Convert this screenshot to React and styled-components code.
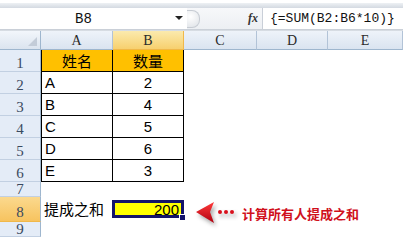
import React from "react";
import styled, { createGlobalStyle } from "styled-components";

const GlobalStyle = createGlobalStyle`
  html, body {
    margin: 0;
    padding: 0;
    background: #fff;
  }
  body {
    width: 419px;
    height: 251px;
    overflow: hidden;
  }
`;

const COLS = ["A", "B", "C", "D", "E"];
const COL_WIDTHS = [72, 71, 73, 71, 75];
const ROW_HEIGHTS = [22, 22, 22, 22, 22, 22, 15, 25, 15];

const DATA = [
    ["姓名", "数量"],
    ["A", "2"],
    ["B", "4"],
    ["C", "5"],
    ["D", "6"],
    ["E", "3"],
];

const Page = styled.div`
    position: relative;
    width: 419px;
    height: 251px;
    background: #fff;
`;

const Sheet = styled.div`
    width: 403px;
    display: flex;
    flex-direction: column;
`;

const RibbonEdge = styled.div`
    margin-top: 3px;
    height: 5px;
    background: linear-gradient(#eef1f4, #d3d9e1);
`;

const FormulaRow = styled.div`
    display: grid;
    grid-template-columns: 187px 75px 1fr;
    height: 21px;
    background: #fff;
`;

const NameBox = styled.div`
    position: relative;
    display: flex;
    align-items: center;
    justify-content: center;
    padding-right: 20px;
    font: 14px "Liberation Mono", monospace;
    color: #111;
`;

const DropArrow = styled.span`
    position: absolute;
    right: 4px;
    top: 8px;
    width: 0;
    height: 0;
    border-left: 4px solid transparent;
    border-right: 4px solid transparent;
    border-top: 4px solid #222;
`;

const FxZone = styled.div`
    display: flex;
    align-items: center;
    justify-content: space-between;
    padding: 0 4px 0 4px;
    background: linear-gradient(#f7f8fa, #eceff3);
`;

const RoundButton = styled.span`
    width: 12px;
    height: 16px;
    border-radius: 0 8px 8px 0;
    border: 1px solid #c7ccd3;
    border-left: none;
    background: radial-gradient(circle at 30% 35%, #fff, #dde1e6);
    margin-left: -4px;
`;

const Fx = styled.span`
    font: italic bold 12px "Liberation Serif", serif;
    color: #333;
`;

const FormulaInput = styled.div`
    display: flex;
    align-items: center;
    padding-left: 7px;
    border-left: 1px solid #c9cfd8;
    font: 13px "Liberation Mono", monospace;
    color: #111;
    white-space: nowrap;
`;

const HeaderRule = styled.div`
    height: 2px;
    background: linear-gradient(#c4cad3, #dde2e8);
`;

const Grid = styled.div`
    display: grid;
    grid-template-columns: 41px ${COL_WIDTHS.map(w => `${w}px`).join(" ")};
    grid-template-rows: 19px ${ROW_HEIGHTS.map(h => `${h}px`).join(" ")};
`;

const Corner = styled.div`
    position: relative;
    background: linear-gradient(#f2f6fb, #dbe4ef);
    border-right: 1px solid #9eb6ce;
    border-bottom: 1px solid #9eb6ce;
    &::after {
        content: "";
        position: absolute;
        right: 3px;
        bottom: 3px;
        border-left: 9px solid transparent;
        border-bottom: 9px solid #c3ccd8;
    }
`;

const ColHead = styled.div`
    display: flex;
    align-items: center;
    justify-content: center;
    padding-top: 1px;
    box-sizing: border-box;
    background: ${props => props.$active
        ? "linear-gradient(#fbeaae, #f7d06f)"
        : "linear-gradient(#eef3f9, #dae4f0)"};
    border-right: 1px solid ${props => props.$active ? "#f0b84a" : "#b2c3d7"};
    border-bottom: 1px solid ${props => props.$active ? "#f0b84a" : "#9eb6ce"};
    font: 14px "Liberation Serif", serif;
    color: #2b2b2b;
`;

const RowHead = styled.div`
    display: flex;
    align-items: center;
    justify-content: center;
    padding-top: ${props => props.$short ? "0" : "5px"};
    box-sizing: border-box;
    background: ${props => props.$active
        ? "linear-gradient(#fbd98e, #f7c35f)"
        : "#e4ecf7"};
    border-right: 1px solid #9eb6ce;
    border-bottom: 1px solid ${props => props.$active ? "#f0b84a" : "#c2d0e2"};
`;

const RowLabel = styled.span`
    font: 15px "Liberation Serif", serif;
    line-height: 14px;
    color: #3a4a60;
`;

const Cell = styled.div`
    display: flex;
    align-items: center;
    justify-content: ${props => props.$align || "flex-start"};
    padding: 0 3px;
    box-sizing: border-box;
    background: ${props => props.$fill || "#fff"};
    border-right: ${props => props.$boxed ? "1px solid #000" : "none"};
    border-bottom: ${props => props.$boxed ? "1px solid #000" : "none"};
    border-left: ${props => props.$first ? "1px solid #000" : "none"};
    font: ${props => props.$cjk
        ? "15px \"Noto Sans CJK SC\", sans-serif"
        : "15px \"Liberation Sans\", Arial, sans-serif"};
    color: #000;
    white-space: nowrap;
`;

const LabelCell = styled(Cell)`
    align-items: flex-end;
    padding-bottom: 3px;
    font-size: 15px;
`;

const SelectedCell = styled.div`
    position: relative;
    display: flex;
    align-items: center;
    justify-content: flex-end;
    margin: 3px 0 4px -1px;
    padding-right: 2px;
    border: 3px solid #14146a;
    background: #ffff00;
    font: 15px "Liberation Sans", Arial, sans-serif;
    color: #000;
`;

const FillHandle = styled.span`
    position: absolute;
    right: -5px;
    bottom: -6px;
    width: 5px;
    height: 5px;
    background: #14146a;
    border: 1px solid #fff;
`;

const Note = styled.div`
    position: absolute;
    left: 195px;
    top: 200px;
    display: flex;
    align-items: center;
    gap: 6px;
`;

const NoteText = styled.span`
    font: bold 13px "Noto Sans CJK SC", sans-serif;
    color: #d0101c;
`;

const ArrowIcon = () => (
    <svg width="41" height="26" viewBox="0 0 41 26" style={{ filter: "drop-shadow(2px 3px 2px rgba(0,0,0,0.35))" }}>
        <defs>
            <linearGradient id="arr" x1="0" y1="0" x2="0" y2="1">
                <stop offset="0" stopColor="#ff3a3a" />
                <stop offset="1" stopColor="#b00010" />
            </linearGradient>
        </defs>
        <path d="M1 12 L19 2 L15 12 L19 23 Z" fill="url(#arr)" />
        <circle cx="25" cy="12" r="2" fill="#d8101c" />
        <circle cx="31" cy="12" r="2" fill="#d8101c" />
        <circle cx="37" cy="12" r="2" fill="#d8101c" />
    </svg>
);

const renderBody = () => {
    const cells = [];
    ROW_HEIGHTS.forEach((h, r) => {
        const rowNo = r + 1;
        cells.push(
            <RowHead key={`h${rowNo}`} $active={rowNo === 8} $short={h < 20}>
                <RowLabel>{rowNo}</RowLabel>
            </RowHead>
        );
        COLS.forEach((c, ci) => {
            const key = `${c}${rowNo}`;
            if (rowNo <= 6 && ci < 2) {
                const value = DATA[r][ci];
                const isHeader = rowNo === 1;
                cells.push(
                    <Cell
                        key={key}
                        $boxed
                        $first={ci === 0}
                        $fill={isHeader ? "#ffc000" : "#fff"}
                        $align={isHeader || ci === 1 ? "center" : "flex-start"}
                        $cjk={isHeader}
                    >
                        {value}
                    </Cell>
                );
            } else if (rowNo === 8 && ci === 0) {
                cells.push(<LabelCell key={key} $cjk>提成之和</LabelCell>);
            } else if (rowNo === 8 && ci === 1) {
                cells.push(
                    <SelectedCell key={key}>
                        200
                        <FillHandle />
                    </SelectedCell>
                );
            } else {
                cells.push(<Cell key={key} />);
            }
        });
    });
    return cells;
};

const App = () => (
    <Page>
        <GlobalStyle />
        <Sheet>
            <RibbonEdge />
            <FormulaRow>
                <NameBox>
                    B8
                    <DropArrow />
                </NameBox>
                <FxZone>
                    <RoundButton />
                    <Fx>fx</Fx>
                </FxZone>
                <FormulaInput>{"{=SUM(B2:B6*10)}"}</FormulaInput>
            </FormulaRow>
            <HeaderRule />
            <Grid>
                <Corner />
                {COLS.map(c => (
                    <ColHead key={c} $active={c === "B"}>{c}</ColHead>
                ))}
                {renderBody()}
            </Grid>
        </Sheet>
        <Note>
            <ArrowIcon />
            <NoteText>计算所有人提成之和</NoteText>
        </Note>
    </Page>
);

export default App;
